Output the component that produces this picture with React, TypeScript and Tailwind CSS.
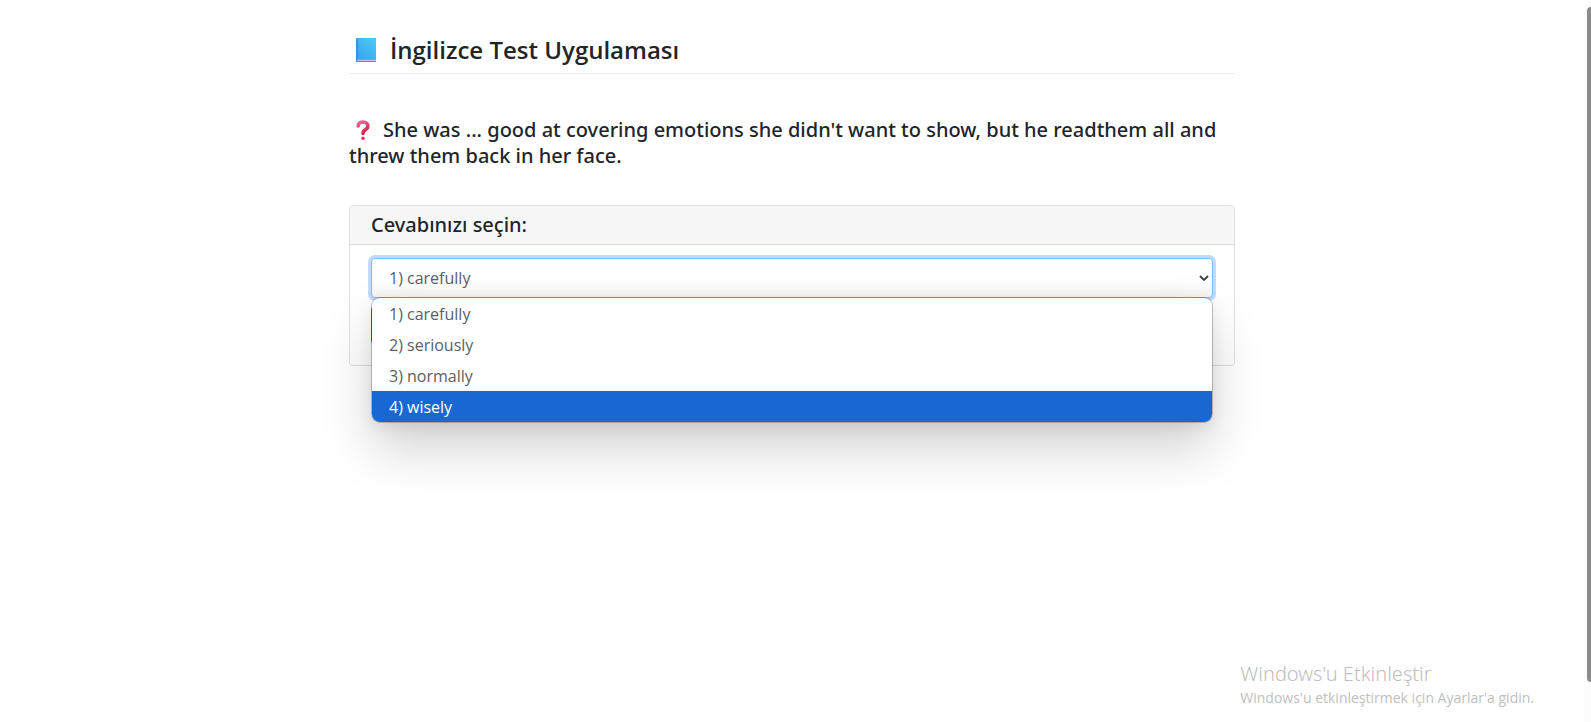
import { useState } from "react";

const options = ["1) carefully", "2) seriously", "3) normally", "4) wisely"];

function BookIcon() {
  return (
    <svg viewBox="0 0 20 24" className="h-6 w-5 shrink-0" aria-hidden="true">
      <defs>
        <linearGradient id="cover" x1="1" y1="0" x2="0.3" y2="1">
          <stop offset="0" stopColor="#50cdf4" />
          <stop offset="1" stopColor="#3aa7f0" />
        </linearGradient>
      </defs>
      <path d="M0 1.5Q0 0 1.5 0H20V24H1.5Q0 24 0 22.5Z" fill="#3f7ccb" />
      <path d="M2 0H18.5Q20 0 20 1V21H2Z" fill="url(#cover)" />
      <path d="M0 1.5Q0 0 2 0V21H0Z" fill="#3c95d3" />
      <path d="M1.5 21.5H20V23H1.5Q1 22 1.5 21.5Z" fill="#cdbcf3" />
      <path d="M0 22.3Q1 23 2 23H20V24H1.5Q0 24 0 22.3Z" fill="#6a7ddd" />
    </svg>
  );
}

function QuestionIcon() {
  return (
    <svg viewBox="0 0 14 20" className="inline-block h-5 w-4 align-[-3px]" aria-hidden="true">
      <defs>
        <linearGradient id="mark" x1="0" y1="0" x2="0.4" y2="1">
          <stop offset="0" stopColor="#f4659a" />
          <stop offset="1" stopColor="#e0244e" />
        </linearGradient>
      </defs>
      <path
        d="M2.2 6C2.2 3.4 4.2 2 7 2S11.9 3.6 11.9 6.2C11.9 9.7 7 9.3 7 13.5"
        fill="none"
        stroke="url(#mark)"
        strokeWidth="3.6"
        strokeLinecap="round"
        strokeLinejoin="round"
      />
      <circle cx="7" cy="18.2" r="1.7" fill="#e8305c" />
    </svg>
  );
}

export default function App() {
  const [answer, setAnswer] = useState(options[0]);
  const [active, setActive] = useState(3);

  return (
    <div className="flex min-h-screen bg-white font-['Open_Sans','Noto_Sans',sans-serif] text-[#212529]">
      <div className="flex min-w-0 flex-1 flex-col">
        <main className="mx-auto w-full max-w-[886px] pt-8">
          <h1 className="flex h-[42px] items-center gap-[14px] border-b border-[#eeeeee] pb-[6px] pl-[7px] text-2xl font-semibold">
            <BookIcon />
            İngilizce Test Uygulaması
          </h1>

          <h2 className="mt-[43px] font-['Noto_Sans',sans-serif] text-xl leading-[26px] font-medium">
            <span className="pr-3 pl-[6px]">
              <QuestionIcon />
            </span>
            She was ... good at covering emotions she didn't want to show, but he readthem all and
            threw them back in her face.
          </h2>

          <form
            className="mt-9 rounded border border-[#dfdfdf] bg-white"
            onSubmit={(event) => event.preventDefault()}
          >
            <label
              htmlFor="answer"
              className="flex h-[39px] items-center rounded-t border-b border-[#dfdfdf] bg-[#f7f7f7] px-[21px] font-['Noto_Sans',sans-serif] text-xl font-medium"
            >
              Cevabınızı seçin:
            </label>
            <div className="px-[21px] pt-[13px] pb-[21px]">
              <div className="relative">
                <select
                  id="answer"
                  value={answer}
                  onChange={(event) => setAnswer(event.target.value)}
                  className="block h-10 w-full appearance-none rounded border border-[#80bdff] bg-white bg-linear-to-b from-white from-60% to-[#f4f4f4] pl-[17px] text-base text-[#5a6066] ring-3 ring-[#bfdcff] outline-none"
                >
                  {options.map((option) => (
                    <option key={option}>{option}</option>
                  ))}
                </select>
                <svg
                  viewBox="0 0 10 6"
                  className="pointer-events-none absolute top-[17px] right-1 h-[6px] w-[10px]"
                  aria-hidden="true"
                >
                  <path d="M1 1L5 5L9 1" fill="none" stroke="#3c4046" strokeWidth="1.8" />
                </svg>
                <ul
                  role="listbox"
                  aria-label="Cevabınızı seçin:"
                  className="absolute top-full right-px left-px z-10 overflow-hidden rounded-lg bg-white text-base text-[#5a6066] shadow-[0_0_0_1px_rgba(0,0,0,0.22),0_26px_52px_rgba(0,0,0,0.18),0_5px_16px_rgba(0,0,0,0.08)]"
                >
                  {options.map((option, index) => (
                    <li
                      key={option}
                      role="option"
                      aria-selected={index === active}
                      onMouseEnter={() => setActive(index)}
                      onClick={() => setAnswer(option)}
                      className={
                        index === active
                          ? "flex h-[31px] items-center bg-[#1967d2] pl-[17px] text-white"
                          : "flex h-[31px] items-center pl-[17px]"
                      }
                    >
                      {option}
                    </li>
                  ))}
                </ul>
              </div>
              <button
                type="submit"
                aria-label="Cevapla"
                className="mt-2 block h-[38px] w-24 rounded bg-[#007bff]"
              />
            </div>
          </form>
        </main>

        <aside className="mt-auto mr-[50px] mb-[14px] self-end text-[#c0c0c0]">
          <p className="font-['Noto_Sans',sans-serif] text-xl leading-7 font-light">
            Windows'u Etkinleştir
          </p>
          <p className="text-sm leading-5">Windows'u etkinleştirmek için Ayarlar'a gidin.</p>
        </aside>
      </div>

      <div className="flex w-[7px] flex-col bg-[#fcfcfc] pt-[7px] pb-10 pl-[3px]">
        <div className="flex-1 rounded-l bg-[#8b8b8b]" />
      </div>
    </div>
  );
}
